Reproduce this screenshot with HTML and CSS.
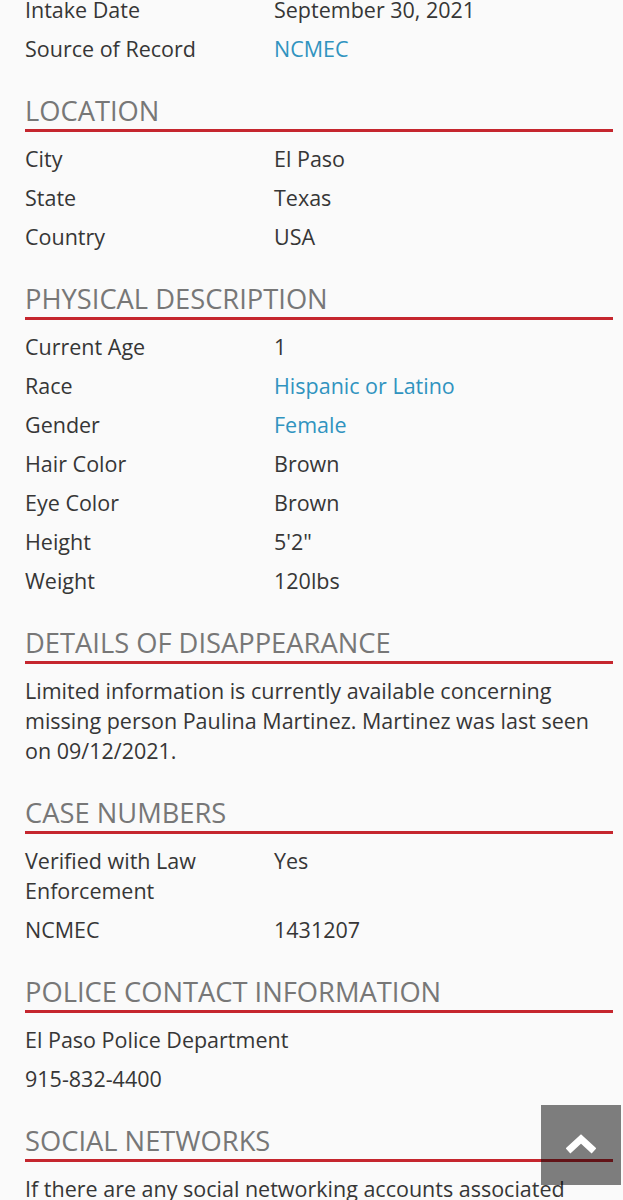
FILE: index.html
```html
<!DOCTYPE html>
<html lang="en">
<head>
<meta charset="utf-8">
<title>Case Details</title>
<link rel="stylesheet" href="styles.css">
</head>
<body>
<main class="page">
  <section class="section first">
    <div class="rows">
      <div class="row"><span class="label">Intake Date</span><span class="value">September 30, 2021</span></div>
      <div class="row"><span class="label">Source of Record</span><span class="value link">NCMEC</span></div>
    </div>
  </section>

  <section class="section">
    <h2 class="heading">LOCATION</h2>
    <div class="rows">
      <div class="row"><span class="label">City</span><span class="value">El Paso</span></div>
      <div class="row"><span class="label">State</span><span class="value">Texas</span></div>
      <div class="row"><span class="label">Country</span><span class="value">USA</span></div>
    </div>
  </section>

  <section class="section">
    <h2 class="heading">PHYSICAL DESCRIPTION</h2>
    <div class="rows">
      <div class="row"><span class="label">Current Age</span><span class="value">1</span></div>
      <div class="row"><span class="label">Race</span><span class="value link">Hispanic or Latino</span></div>
      <div class="row"><span class="label">Gender</span><span class="value link">Female</span></div>
      <div class="row"><span class="label">Hair Color</span><span class="value">Brown</span></div>
      <div class="row"><span class="label">Eye Color</span><span class="value">Brown</span></div>
      <div class="row"><span class="label">Height</span><span class="value">5'2"</span></div>
      <div class="row"><span class="label">Weight</span><span class="value">120lbs</span></div>
    </div>
  </section>

  <section class="section">
    <h2 class="heading">DETAILS OF DISAPPEARANCE</h2>
    <p class="text">Limited information is currently available concerning missing person Paulina Martinez. Martinez was last seen on 09/12/2021.</p>
  </section>

  <section class="section">
    <h2 class="heading">CASE NUMBERS</h2>
    <div class="rows">
      <div class="row"><span class="label">Verified with Law Enforcement</span><span class="value">Yes</span></div>
      <div class="row"><span class="label">NCMEC</span><span class="value">1431207</span></div>
    </div>
  </section>

  <section class="section">
    <h2 class="heading">POLICE CONTACT INFORMATION</h2>
    <div class="rows">
      <div class="line">El Paso Police Department</div>
      <div class="line">915-832-4400</div>
    </div>
  </section>

  <section class="section">
    <h2 class="heading">SOCIAL NETWORKS</h2>
    <p class="text">If there are any social networking accounts associated with this person, please contact us so that we can add them to this page.</p>
  </section>
</main>

<a class="to-top" href="#" aria-label="Back to top">
  <svg viewBox="0 0 30 20" width="30" height="20" aria-hidden="true">
    <path d="M2 17 L15 5 L28 17" fill="none" stroke="#ffffff" stroke-width="7" stroke-linejoin="miter"/>
  </svg>
</a>
</body>
</html>
```

FILE: styles.css
```css
html, body {
  margin: 0;
  padding: 0;
  background: #fafafa;
}

body {
  font-family: "Open Sans", "Noto Sans", sans-serif;
  font-size: 21.5px;
  line-height: 30px;
  color: #363636;
  overflow: hidden;
  height: 1200px;
}

.page {
  margin-top: -5px;
  padding: 0 10px 0 25px;
  display: flex;
  flex-direction: column;
  gap: 29px;
}

.heading {
  margin: 0 0 12px;
  font-size: 27.3px;
  font-weight: 500;
  line-height: 36px;
  color: #777777;
  border-bottom: 3px solid #c5262e;
  letter-spacing: 0;
}

.rows {
  display: flex;
  flex-direction: column;
  gap: 9px;
}

.row {
  display: grid;
  grid-template-columns: 249px 1fr;
}

.label {
  padding-right: 20px;
}

.link {
  color: #3093bf;
}

.text {
  margin: 0;
}

.to-top {
  position: fixed;
  left: 541px;
  top: 1105px;
  width: 80px;
  height: 80px;
  background: rgba(0, 0, 0, 0.5);
  display: flex;
  align-items: center;
  justify-content: center;
}

.to-top svg {
  display: block;
  margin-top: -3px;
}
```
